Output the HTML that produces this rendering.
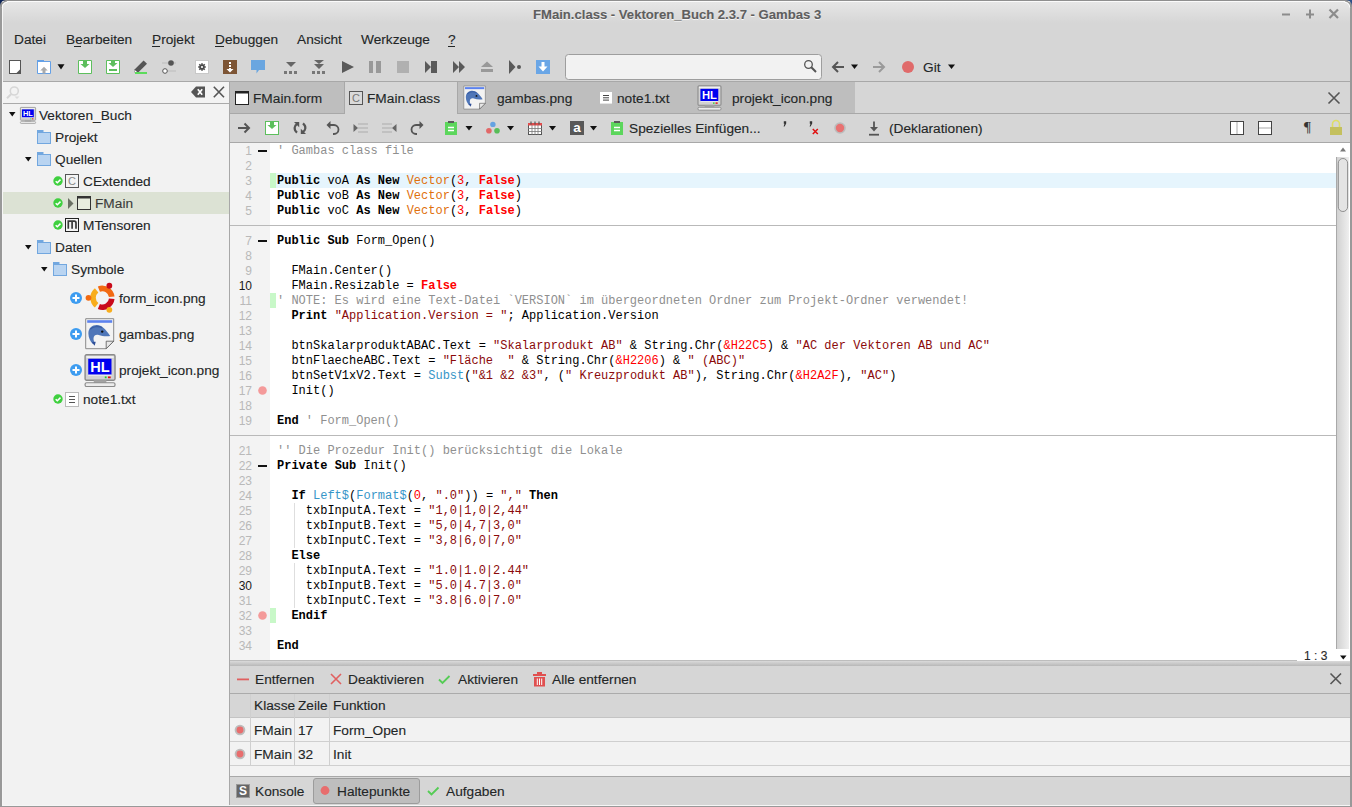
<!DOCTYPE html><html><head><meta charset="utf-8"><style>
*{margin:0;padding:0;box-sizing:border-box}
html,body{width:1352px;height:807px;overflow:hidden;background:#d6d6d6;font-family:"Liberation Sans",sans-serif}
.a{position:absolute;display:block}
.t{position:absolute;white-space:pre;line-height:16px;font-family:"Liberation Sans",sans-serif;-webkit-text-stroke:0.12px currentColor}
.c{position:absolute;left:277px;white-space:pre;font-family:"Liberation Mono",monospace;font-size:12px;line-height:15px;color:#000}
.n{position:absolute;left:230px;width:22px;text-align:right;font-family:"Liberation Sans",sans-serif;font-size:12px;line-height:15px;color:#b9b9b9}
.k{font-weight:bold}
.cm{color:#8f8f8f}
.s{color:#8b0a0a}
.nu{color:#ff0000}
.kf{color:#ff0000;font-weight:bold}
.cl{color:#e0700c}
.fn{color:#3796c8}
u{text-decoration:none;border-bottom:1px solid #232627}
</style></head><body>
<div class="a" style="left:0px;top:0px;width:1352px;height:28px;background:linear-gradient(#e6e6e6 2px,#d6d6d6 23px);"></div>
<div class="a" style="left:0px;top:0px;width:1352px;height:1px;background:#6a6a6a;"></div>
<div class="a" style="left:1px;top:1px;width:1350px;height:1px;background:#f4f4f4;"></div>
<div class="t" style="left:533px;top:7px;font-size:13.1px;color:#5e5e5e;font-weight:bold;text-shadow:0 1px 0 #f6f6f6">FMain.class - Vektoren_Buch 2.3.7 - Gambas 3</div>
<svg class="a" style="left:1278px;top:6px" width="62" height="16" viewBox="0 0 62 16"><rect x="4" y="7.5" width="8" height="2" fill="#8c8c8c"/><rect x="28" y="4" width="8" height="2" fill="#8c8c8c" transform="translate(0,3.5)"/><rect x="31" y="3.5" width="2" height="9" fill="#8c8c8c"/><path d="M51.5 3.5 L60 12 M60 3.5 L51.5 12" stroke="#8c8c8c" stroke-width="2.2"/></svg>
<div class="t" style="left:14px;top:32px;font-size:13.7px;color:#232627;font-weight:normal;">Datei</div>
<div class="t" style="left:66px;top:32px;font-size:13.7px;color:#232627;font-weight:normal;">Bearbeiten</div>
<div class="t" style="left:152px;top:32px;font-size:13.7px;color:#232627;font-weight:normal;">Projekt</div>
<div class="t" style="left:215px;top:32px;font-size:13.7px;color:#232627;font-weight:normal;">Debuggen</div>
<div class="t" style="left:297px;top:32px;font-size:13.7px;color:#232627;font-weight:normal;">Ansicht</div>
<div class="t" style="left:361px;top:32px;font-size:13.7px;color:#232627;font-weight:normal;">Werkzeuge</div>
<div class="t" style="left:448px;top:32px;font-size:13.7px;color:#232627;font-weight:normal;">?</div>
<div class="a" style="left:74px;top:46px;width:7px;height:1px;background:#232627;"></div>
<div class="a" style="left:152px;top:46px;width:8px;height:1px;background:#232627;"></div>
<div class="a" style="left:215px;top:46px;width:9px;height:1px;background:#232627;"></div>
<div class="a" style="left:448px;top:46px;width:7px;height:1px;background:#232627;"></div>
<div class="a" style="left:0px;top:0px;width:1px;height:807px;background:#7a7a7a;"></div>
<div class="a" style="left:1351px;top:0px;width:1px;height:807px;background:#7a7a7a;"></div>
<div class="a" style="left:0px;top:806px;width:1352px;height:1px;background:#7a7a7a;"></div>
<svg class="a" style="left:0px;top:52px" width="1352" height="30" viewBox="0 0 1352 30"><rect x="9.5" y="8.5" width="11" height="13" fill="#fff" stroke="#555"/><path d="M21 16.5 V22 H15.5 z" fill="#555"/><path d="M37.5 9.5 h13 v12 h-13 z" fill="#fff" stroke="#64a0e6"/><rect x="37" y="8" width="7" height="2" fill="#64a0e6"/><path d="M40.3 18.5 l3.7 -3.8 3.7 3.8 h-2.2 v3 h-3 v-3 z" fill="#aaa"/><path d="M57.5 12.3 h7 l-3.5 5.2 z" fill="#111"/><path d="M78.5 8.5 h13 v13 h-13 z" fill="#fff" stroke="#5dbf5d"/><path d="M83 8 h4 v4 h2.5 l-4.5 4 -4.5 -4 h2.5 z" fill="#5dbf5d"/><path d="M106.5 8.5 h13 v13 h-13 z" fill="#fff" stroke="#5dbf5d"/><path d="M111 8 h4 v3 h2.5 l-4.5 4 -4.5 -4 h2.5 z" fill="#5dbf5d"/><rect x="109" y="17" width="8" height="2" fill="#5dbf5d"/><path d="M134.8 17.2 L143.6 8.4 L147 11.8 L138.2 20.6 L134.5 21 z" fill="#555"/><path d="M135.2 18.2 l2.4 2.4 -3 .5 z" fill="#fff"/><rect x="135" y="20" width="12" height="2" fill="#5cdc5c"/><rect x="162" y="10.5" width="14" height="1" fill="#bbb"/><circle cx="171" cy="11" r="2.8" fill="#555"/><rect x="166" y="18.5" width="10" height="1" fill="#bbb"/><circle cx="165" cy="19" r="2.3" fill="#fff" stroke="#555" stroke-width="1"/><rect x="195.5" y="8.5" width="13" height="13" fill="#fff" stroke="#c8c8c8"/><path d="M202 11.2v7.6M198.2 15h7.6M199.3 12.3l5.4 5.4M204.7 12.3l-5.4 5.4" stroke="#4a4a4a" stroke-width="1.6"/><circle cx="202" cy="15" r="2.6" fill="#4a4a4a"/><circle cx="202" cy="15" r="1.1" fill="#fff"/><rect x="223" y="8" width="14" height="14" fill="#7d5535"/><rect x="229" y="10" width="2" height="2" fill="#fff"/><rect x="229" y="13" width="2" height="2" fill="#fff"/><path d="M229 16 h2 v1 h2.5 l-3.5 3.5 -3.5 -3.5 h2.5 z" fill="#fff"/><path d="M251 8 h14 v10 h-6 l-2.5 3.5 v-3.5 h-5.5 z" fill="#6aa6e0"/><path d="M286 10 h10 l-5 5 z" fill="#666"/><rect x="284" y="19" width="3" height="3" fill="#777"/><rect x="289" y="19" width="3" height="3" fill="#777"/><rect x="294" y="19" width="3" height="3" fill="#777"/><path d="M314 8 h10 l-5 4 z M314 12 h10 l-5 5 z" fill="#666"/><rect x="312" y="19" width="3" height="3" fill="#777"/><rect x="317" y="19" width="3" height="3" fill="#777"/><rect x="322" y="19" width="3" height="3" fill="#777"/><path d="M342 9 L354 15 L342 21 z" fill="#5a5a5a"/><rect x="369" y="9" width="4" height="12" fill="#999"/><rect x="376" y="9" width="5" height="12" fill="#999"/><rect x="397" y="9" width="12" height="12" fill="#b0b0b0"/><path d="M425 9 L431 15 L425 21 z" fill="#5a5a5a"/><rect x="431" y="9" width="6" height="12" fill="#5a5a5a"/><path d="M453 9 L459 15 L453 21 z M459 9 L465 15 L459 21 z" fill="#5a5a5a"/><path d="M481 15 L487 9.5 L493 15 z" fill="#999"/><rect x="481" y="17" width="12" height="3" fill="#999"/><path d="M509 8 L515.5 15 L509 22 z" fill="#5a5a5a"/><circle cx="519" cy="15" r="2" fill="#5a5a5a"/><rect x="536" y="8" width="14" height="14" fill="#6aa6e6"/><path d="M541.5 10 h3 v4.5 h3 l-4.5 5 -4.5 -5 h3 z" fill="#fff"/><rect x="565.5" y="2.5" width="256" height="25" rx="3" fill="#f2f2f2" stroke="#9e9e9e"/><circle cx="808.5" cy="12.5" r="3.8" fill="none" stroke="#555" stroke-width="1.3"/><path d="M811.3 15.3 L816 20" stroke="#555" stroke-width="2"/><path d="M833 15 h11 M838 10 l-5 5 5 5" fill="none" stroke="#555" stroke-width="2"/><path d="M851 12.5 h7 l-3.5 4.5 z" fill="#111"/><path d="M873 15 h11 M879 10 l5 5 -5 5" fill="none" stroke="#9a9a9a" stroke-width="2"/><circle cx="908" cy="15" r="6" fill="#e06b6b"/><path d="M948 12.5 h7 l-3.5 4.5 z" fill="#111"/></svg>
<div class="t" style="left:923px;top:60px;font-size:13.7px;color:#232627;font-weight:normal;">Git</div>
<div class="a" style="left:1px;top:81px;width:1350px;height:1px;background:#a8a8a8;"></div>
<div class="a" style="left:0px;top:82px;width:229px;height:725px;background:#f2f2f2;"></div>
<div class="a" style="left:0px;top:82px;width:229px;height:21px;background:#f3f3f3;"></div>
<div class="a" style="left:0px;top:103px;width:229px;height:1px;background:#aaaaaa;"></div>
<div class="a" style="left:229px;top:82px;width:1px;height:725px;background:#a8a8a8;"></div>
<svg class="a" style="left:0px;top:82px" width="229" height="21" viewBox="0 0 229 21"><circle cx="14.3" cy="9" r="4" fill="none" stroke="#d6d6d6" stroke-width="1.6"/><path d="M11.3 12 L7 16.3" stroke="#d6d6d6" stroke-width="2"/><path d="M14.5 14.5 h5 l-2.5 2.5 z" fill="#dcdcdc"/><path d="M191 10 L196 4.5 H205 V15.5 H196 z" fill="#555"/><path d="M197.8 7.3 L202.2 12.7 M202.2 7.3 L197.8 12.7" stroke="#fff" stroke-width="1.7"/><path d="M213.8 4.8 L224 15.2 M224 4.8 L213.8 15.2" stroke="#555" stroke-width="1.6"/></svg>
<div class="a" style="left:1px;top:192px;width:228px;height:22px;background:#dce2d4;"></div>
<svg class="a" style="left:0px;top:82px" width="229" height="340" viewBox="0 0 229 340"><path d="M9 30 h6.5 l-3.25 4.5 z" fill="#111"/><g transform="translate(20,25) scale(1.0)"><rect x="0.4" y="0.4" width="15.2" height="12.9" rx="0.7" fill="#d2d2d2" stroke="#8a8a8a" stroke-width="0.7"/><rect x="1.1" y="1.1" width="13.8" height="0.9" fill="#f2f2f2"/><rect x="2" y="2.4" width="11.8" height="8.1" fill="#0000f0"/><rect x="2" y="10.5" width="11.8" height="0.5" fill="#f4f4f4"/><text x="7.9" y="9.1" style="font-family:&quot;Liberation Sans&quot;" font-weight="bold" font-size="7.4" fill="#fff" text-anchor="middle">HL</text><rect x="10.4" y="11.4" width="0.9" height="0.9" fill="#20d020"/><rect x="12" y="11.4" width="1.4" height="0.9" fill="#e01010"/><rect x="4.8" y="13.3" width="6.4" height="1.4" fill="#a4a4a4"/><rect x="0.4" y="14.6" width="15.2" height="1.9" rx="0.8" fill="#ececec" stroke="#8a8a8a" stroke-width="0.6"/></g><rect x="37.5" y="50.5" width="13" height="11" fill="#b9d4f1" stroke="#72a7df"/><rect x="37" y="48" width="6.5" height="3" fill="#72a7df"/><path d="M25 75 h6.5 l-3.25 4.5 z" fill="#111"/><rect x="37.5" y="72.5" width="13" height="11" fill="#b9d4f1" stroke="#72a7df"/><rect x="37" y="70" width="6.5" height="3" fill="#72a7df"/><circle cx="58" cy="99" r="4.7" fill="#3fd03f"/><path d="M55.7 99.2 l1.6 1.6 3.2 -3.2" fill="none" stroke="#fff" stroke-width="1.5"/><rect x="65.5" y="92.5" width="13" height="13" fill="#f4f4f4" stroke="#555"/><text x="72" y="103.3" style="font-family:&quot;Liberation Sans&quot;" font-size="11" fill="#888" text-anchor="middle">C</text><circle cx="58" cy="121" r="4.7" fill="#3fd03f"/><path d="M55.7 121.2 l1.6 1.6 3.2 -3.2" fill="none" stroke="#fff" stroke-width="1.5"/><path d="M68 116 L73.5 121.5 L68 127 z" fill="#6a7064"/><rect x="77.5" y="114.5" width="13" height="13" fill="#e8eddf" stroke="#333"/><rect x="77" y="114" width="14" height="2.5" fill="#333"/><circle cx="58" cy="143" r="4.7" fill="#3fd03f"/><path d="M55.7 143.2 l1.6 1.6 3.2 -3.2" fill="none" stroke="#fff" stroke-width="1.5"/><rect x="65.5" y="136.5" width="13" height="13" fill="#f4f4f4" stroke="#222"/><path d="M68.3 146.8 V139.2 H74.3 Q76 139.2 76 141 V146.8 M72.1 139.5 V146.8" fill="none" stroke="#3a3a3a" stroke-width="1.7"/><path d="M25 163 h6.5 l-3.25 4.5 z" fill="#111"/><rect x="37.5" y="160.5" width="13" height="11" fill="#b9d4f1" stroke="#72a7df"/><rect x="37" y="158" width="6.5" height="3" fill="#72a7df"/><path d="M41 185 h6.5 l-3.25 4.5 z" fill="#111"/><rect x="53.5" y="182.5" width="13" height="11" fill="#b9d4f1" stroke="#72a7df"/><rect x="53" y="180" width="6.5" height="3" fill="#72a7df"/><circle cx="76" cy="216" r="6" fill="#3d9cf0"/><path d="M72.5 216 h7 M76 212.5 v7" stroke="#fff" stroke-width="2"/><path d="M97.83 204.49 A12.2 12.2 0 0 1 114.53 214.52 L108.96 215.11 A6.6 6.6 0 0 0 99.93 209.68 z" fill="#f26a12"/><path d="M114.53 217.08 A12.2 12.2 0 0 1 97.83 227.11 L99.93 221.92 A6.6 6.6 0 0 0 108.96 216.49 z" fill="#c90a1a"/><path d="M94.89 225.41 A12.2 12.2 0 0 1 94.89 206.19 L98.34 210.60 A6.6 6.6 0 0 0 98.34 221.00 z" fill="#f8ad1c"/><circle cx="109.35" cy="203.76" r="2.9" fill="#c90a1a"/><circle cx="88.50" cy="215.80" r="2.9" fill="#f26a12"/><circle cx="109.35" cy="227.84" r="2.9" fill="#f8ad1c"/><circle cx="76" cy="252" r="6" fill="#3d9cf0"/><path d="M72.5 252 h7 M76 248.5 v7" stroke="#fff" stroke-width="2"/><g transform="translate(85.2,236.2) scale(1.0)"><path d="M0.5 0.5 H28.5 V23 L21 30.5 H0.5 z" fill="#f3f3f3" stroke="#8a8a8a" stroke-width="1"/><path d="M28.5 23 H21 V30.5 z" fill="#e8e8e8" stroke="#555" stroke-width="0.8"/><rect x="2" y="2" width="25" height="2.6" fill="#5c82ee"/><path d="M3.2 15.5 C3 10 7 6.8 11.5 6.8 C16.5 6.8 20.5 11 25 17.8 C21 18.6 17 18 13.5 16.8 C10.5 16 8.3 17.5 8.3 20.5 C8.3 22.5 9.2 23.8 10.3 24.8 L7.5 25.5 C5 23 3.3 19.5 3.2 15.5 z" fill="#4f76b8"/><path d="M6.5 24 L10.5 23.5 L9.5 27.5 z" fill="#2f4f98"/><path d="M5 11 C8 8 13 7.5 17 9.5" fill="none" stroke="#3a5ea4" stroke-width="1.3"/><circle cx="17" cy="13.4" r="1.2" fill="#111"/></g><circle cx="76" cy="288" r="6" fill="#3d9cf0"/><path d="M72.5 288 h7 M76 284.5 v7" stroke="#fff" stroke-width="2"/><g transform="translate(84.3,272) scale(1.97)"><rect x="0.4" y="0.4" width="15.2" height="12.9" rx="0.7" fill="#d2d2d2" stroke="#8a8a8a" stroke-width="0.7"/><rect x="1.1" y="1.1" width="13.8" height="0.9" fill="#f2f2f2"/><rect x="2" y="2.4" width="11.8" height="8.1" fill="#0000f0"/><rect x="2" y="10.5" width="11.8" height="0.5" fill="#f4f4f4"/><text x="7.9" y="9.1" style="font-family:&quot;Liberation Sans&quot;" font-weight="bold" font-size="7.4" fill="#fff" text-anchor="middle">HL</text><rect x="10.4" y="11.4" width="0.9" height="0.9" fill="#20d020"/><rect x="12" y="11.4" width="1.4" height="0.9" fill="#e01010"/><rect x="4.8" y="13.3" width="6.4" height="1.4" fill="#a4a4a4"/><rect x="0.4" y="14.6" width="15.2" height="1.9" rx="0.8" fill="#ececec" stroke="#8a8a8a" stroke-width="0.6"/></g><circle cx="58" cy="317" r="4.7" fill="#3fd03f"/><path d="M55.7 317.2 l1.6 1.6 3.2 -3.2" fill="none" stroke="#fff" stroke-width="1.5"/><rect x="65.5" y="310.5" width="13" height="14" fill="#fff" stroke="#bbb"/><path d="M69 314.5h6M69 317.5h6M69 320.5h6" stroke="#555" stroke-width="1"/></svg>
<div class="t" style="left:39px;top:108px;font-size:13.7px;color:#232627;font-weight:normal;">Vektoren_Buch</div>
<div class="t" style="left:55px;top:130px;font-size:13.7px;color:#232627;font-weight:normal;">Projekt</div>
<div class="t" style="left:55px;top:152px;font-size:13.7px;color:#232627;font-weight:normal;">Quellen</div>
<div class="t" style="left:83px;top:174px;font-size:13.7px;color:#232627;font-weight:normal;">CExtended</div>
<div class="t" style="left:95px;top:196px;font-size:13.7px;color:#3b3b3b;font-weight:normal;">FMain</div>
<div class="t" style="left:83px;top:218px;font-size:13.7px;color:#232627;font-weight:normal;">MTensoren</div>
<div class="t" style="left:55px;top:240px;font-size:13.7px;color:#232627;font-weight:normal;">Daten</div>
<div class="t" style="left:71px;top:262px;font-size:13.7px;color:#232627;font-weight:normal;">Symbole</div>
<div class="t" style="left:119px;top:291px;font-size:13.7px;color:#232627;font-weight:normal;">form_icon.png</div>
<div class="t" style="left:119px;top:327px;font-size:13.7px;color:#232627;font-weight:normal;">gambas.png</div>
<div class="t" style="left:119px;top:363px;font-size:13.7px;color:#232627;font-weight:normal;">projekt_icon.png</div>
<div class="t" style="left:83px;top:392px;font-size:13.7px;color:#232627;font-weight:normal;">note1.txt</div>
<div class="a" style="left:230px;top:82px;width:1121px;height:31px;background:#d6d6d6;"></div>
<div class="a" style="left:230px;top:82px;width:625px;height:31px;background:#bebebe;"></div>
<div class="a" style="left:230px;top:113px;width:1121px;height:1px;background:#a8a8a8;"></div>
<div class="a" style="left:344px;top:82px;width:114px;height:32px;background:#d6d6d6;"></div>
<div class="a" style="left:344px;top:82px;width:1px;height:32px;background:#a8a8a8;"></div>
<div class="a" style="left:457px;top:82px;width:1px;height:32px;background:#a8a8a8;"></div>
<svg class="a" style="left:230px;top:82px" width="1122" height="31" viewBox="0 0 1122 31"><rect x="5.5" y="9.5" width="13" height="13" fill="#fff" stroke="#222"/><rect x="5" y="9" width="14" height="2.5" fill="#222"/><rect x="119.5" y="9.5" width="13" height="13" fill="#dadada" stroke="#555"/><text x="126" y="20.3" style="font-family:&quot;Liberation Sans&quot;" font-size="11" fill="#777" text-anchor="middle">C</text><g transform="translate(233.4,3.6) scale(0.77)"><path d="M0.5 0.5 H28.5 V23 L21 30.5 H0.5 z" fill="#f3f3f3" stroke="#8a8a8a" stroke-width="1"/><path d="M28.5 23 H21 V30.5 z" fill="#e8e8e8" stroke="#555" stroke-width="0.8"/><rect x="2" y="2" width="25" height="2.6" fill="#5c82ee"/><path d="M3.2 15.5 C3 10 7 6.8 11.5 6.8 C16.5 6.8 20.5 11 25 17.8 C21 18.6 17 18 13.5 16.8 C10.5 16 8.3 17.5 8.3 20.5 C8.3 22.5 9.2 23.8 10.3 24.8 L7.5 25.5 C5 23 3.3 19.5 3.2 15.5 z" fill="#4f76b8"/><path d="M6.5 24 L10.5 23.5 L9.5 27.5 z" fill="#2f4f98"/><path d="M5 11 C8 8 13 7.5 17 9.5" fill="none" stroke="#3a5ea4" stroke-width="1.3"/><circle cx="17" cy="13.4" r="1.2" fill="#111"/></g><rect x="370" y="10" width="12" height="11.6" fill="#fff"/><path d="M373 13.5h6M373 15.8h6M373 18.1h6" stroke="#444" stroke-width="1"/><g transform="translate(467.4,3.2) scale(1.5125)"><rect x="0.4" y="0.4" width="15.2" height="12.9" rx="0.7" fill="#d2d2d2" stroke="#8a8a8a" stroke-width="0.7"/><rect x="1.1" y="1.1" width="13.8" height="0.9" fill="#f2f2f2"/><rect x="2" y="2.4" width="11.8" height="8.1" fill="#0000f0"/><rect x="2" y="10.5" width="11.8" height="0.5" fill="#f4f4f4"/><text x="7.9" y="9.1" style="font-family:&quot;Liberation Sans&quot;" font-weight="bold" font-size="7.4" fill="#fff" text-anchor="middle">HL</text><rect x="10.4" y="11.4" width="0.9" height="0.9" fill="#20d020"/><rect x="12" y="11.4" width="1.4" height="0.9" fill="#e01010"/><rect x="4.8" y="13.3" width="6.4" height="1.4" fill="#a4a4a4"/><rect x="0.4" y="14.6" width="15.2" height="1.9" rx="0.8" fill="#ececec" stroke="#8a8a8a" stroke-width="0.6"/></g><path d="M1098.5 10.5 L1109.5 21.5 M1109.5 10.5 L1098.5 21.5" stroke="#555" stroke-width="1.6"/></svg>
<div class="t" style="left:253px;top:91px;font-size:13.7px;color:#232627;font-weight:normal;">FMain.form</div>
<div class="t" style="left:367px;top:91px;font-size:13.7px;color:#232627;font-weight:normal;">FMain.class</div>
<div class="t" style="left:497px;top:91px;font-size:13.7px;color:#232627;font-weight:normal;">gambas.png</div>
<div class="t" style="left:617px;top:91px;font-size:13.7px;color:#232627;font-weight:normal;">note1.txt</div>
<div class="t" style="left:732px;top:91px;font-size:13.7px;color:#232627;font-weight:normal;">projekt_icon.png</div>
<div class="a" style="left:230px;top:114px;width:1121px;height:28px;background:#d6d6d6;"></div>
<div class="a" style="left:230px;top:142px;width:1121px;height:1px;background:#a8a8a8;"></div>
<svg class="a" style="left:230px;top:114px" width="1122" height="28" viewBox="0 0 1122 28"><path d="M8 14 h11 M14.5 9.5 l4.5 4.5 -4.5 4.5" fill="none" stroke="#555" stroke-width="2"/><rect x="35.5" y="7.5" width="13" height="13" fill="#fff" stroke="#5dbf5d"/><path d="M40 7 h4 v4 h2.5 l-4.5 4 -4.5 -4 h2.5 z" fill="#5dbf5d"/><path d="M67.5 9.8 C64.3 11.5 63.3 15.5 67 18.7 M72.5 18.2 C75.7 16.5 76.7 12.5 73 9.3" fill="none" stroke="#555" stroke-width="2.2"/><path d="M64 8 H69.2 V13.2 z M76 20 H70.8 V14.8 z" fill="#555"/><path d="M98 11 h6 a4.5 4.5 0 0 1 0 9 h-1" fill="none" stroke="#555" stroke-width="1.8"/><path d="M96.5 11 l4 -4 v8 z" fill="#555"/><path d="M123.5 10 l4.5 4 -4.5 4 z" fill="#666"/><path d="M128 10h10M128 14h10M128 18h10" stroke="#bbb" stroke-width="1.6"/><path d="M152 10h10M152 14h10M152 18h10" stroke="#bbb" stroke-width="1.6"/><path d="M166.5 10 l-4.5 4 4.5 4 z" fill="#666"/><path d="M192 11 h-6 a4.5 4.5 0 0 0 0 9 h1" fill="none" stroke="#555" stroke-width="1.8"/><path d="M193.5 11 l-4 -4 v8 z" fill="#555"/><rect x="215" y="8" width="12" height="13" fill="#5cd65c"/><rect x="218" y="7" width="6" height="2" fill="#5a5a5a"/><path d="M218 13.5h6M218 16.5h6" stroke="#fff" stroke-width="1.3"/><path d="M235.5 12 h7 l-3.5 4.5 z" fill="#111"/><circle cx="262.9" cy="10.4" r="2.7" fill="#64a2e2"/><circle cx="258.9" cy="16.8" r="2.8" fill="#e26868"/><circle cx="267" cy="16.8" r="2.8" fill="#58bd58"/><path d="M277 12 h7 l-3.5 4.5 z" fill="#111"/><rect x="298.5" y="9.5" width="13" height="11" fill="#fff" stroke="#555"/><rect x="298" y="9" width="14" height="2.5" fill="#e24c4c"/><path d="M298 14.5h14M298 17.5h14M302 11v10M305 11v10M308 11v10" stroke="#777" stroke-width="0.8"/><path d="M301 7.5v3M305 7.5v3M309 7.5v3" stroke="#555" stroke-width="1.2"/><path d="M319 12 h7 l-3.5 4.5 z" fill="#111"/><rect x="340" y="7" width="14" height="14" fill="#585858"/><text x="347" y="18" style="font-family:&quot;Liberation Sans&quot;" font-weight="bold" font-size="13.5" fill="#fff" text-anchor="middle">a</text><path d="M360 12 h7 l-3.5 4.5 z" fill="#111"/><rect x="381" y="8" width="12" height="13" fill="#5cd65c"/><rect x="384" y="7" width="6" height="2" fill="#5a5a5a"/><path d="M384 13.5h6M384 16.5h6" stroke="#fff" stroke-width="1.3"/><path d="M553.8 7.2 h2.4 v2.2 l-1.6 3 h-1 l0.9 -2.7 h-0.7 z" fill="#333"/><path d="M579.8 7.2 h2.4 v2.2 l-1.6 3 h-1 l0.9 -2.7 h-0.7 z" fill="#333"/><path d="M582.8 15 l5 5 M587.8 15 l-5 5" stroke="#e01010" stroke-width="1.5"/><circle cx="610" cy="14" r="5" fill="#e87272" stroke="#bcbcbc" stroke-width="1.6"/><path d="M644 7.5 v6.5" stroke="#555" stroke-width="1.8"/><path d="M640 13 h8 l-4 4.5 z" fill="#555"/><rect x="639" y="19.8" width="10" height="1.8" fill="#555"/><rect x="1000.5" y="7.5" width="13" height="13" fill="#fff" stroke="#444"/><rect x="1006.5" y="8" width="1" height="12" fill="#aaa"/><rect x="1028.5" y="7.5" width="13" height="13" fill="#fff" stroke="#444"/><rect x="1029" y="13.5" width="12" height="1" fill="#aaa"/><path d="M1102.5 13 v-3 a3.5 3.5 0 0 1 7 0 v3" fill="none" stroke="#dede62" stroke-width="1.6"/><rect x="1100" y="13" width="12" height="8" fill="#c4c05e"/></svg>
<div class="t" style="left:629px;top:121px;font-size:13.7px;color:#232627;font-weight:normal;">Spezielles Einfügen...</div>
<div class="t" style="left:889px;top:121px;font-size:13.7px;color:#232627;font-weight:normal;">(Deklarationen)</div>
<div class="t" style="left:1304px;top:119px;font-size:15px;color:#333;font-weight:normal;font-family:'Liberation Serif'">¶</div>
<div class="a" style="left:230px;top:143px;width:1106px;height:518px;background:#ffffff;"></div>
<div class="a" style="left:230px;top:143px;width:40px;height:518px;background:#f3f3f3;"></div>
<div class="a" style="left:276px;top:173px;width:1060px;height:15px;background:#e6f5fd;"></div>
<div class="a" style="left:270px;top:173px;width:6px;height:15px;background:#c8f8c8;"></div>
<div class="a" style="left:270px;top:293px;width:6px;height:15px;background:#c8f8c8;"></div>
<div class="a" style="left:270px;top:608px;width:6px;height:15px;background:#c8f8c8;"></div>
<div class="a" style="left:230px;top:225px;width:1106px;height:1px;background:#b9b9b9;"></div>
<div class="a" style="left:230px;top:435px;width:1106px;height:1px;background:#b9b9b9;"></div>
<div class="a" style="left:294px;top:503px;width:1px;height:15px;background:#dedede;"></div>
<div class="a" style="left:294px;top:518px;width:1px;height:15px;background:#dedede;"></div>
<div class="a" style="left:294px;top:533px;width:1px;height:15px;background:#dedede;"></div>
<div class="a" style="left:294px;top:563px;width:1px;height:15px;background:#dedede;"></div>
<div class="a" style="left:294px;top:578px;width:1px;height:15px;background:#dedede;"></div>
<div class="a" style="left:294px;top:593px;width:1px;height:15px;background:#dedede;"></div>
<div class="n" style="top:144px;color:#b9b9b9">1</div>
<div class="n" style="top:159px;color:#b9b9b9">2</div>
<div class="n" style="top:174px;color:#b9b9b9">3</div>
<div class="n" style="top:189px;color:#b9b9b9">4</div>
<div class="n" style="top:204px;color:#b9b9b9">5</div>
<div class="n" style="top:234px;color:#b9b9b9">7</div>
<div class="n" style="top:249px;color:#b9b9b9">8</div>
<div class="n" style="top:264px;color:#b9b9b9">9</div>
<div class="n" style="top:279px;color:#1a1a1a">10</div>
<div class="n" style="top:294px;color:#b9b9b9">11</div>
<div class="n" style="top:309px;color:#b9b9b9">12</div>
<div class="n" style="top:324px;color:#b9b9b9">13</div>
<div class="n" style="top:339px;color:#b9b9b9">14</div>
<div class="n" style="top:354px;color:#b9b9b9">15</div>
<div class="n" style="top:369px;color:#b9b9b9">16</div>
<div class="n" style="top:384px;color:#b9b9b9">17</div>
<div class="n" style="top:399px;color:#b9b9b9">18</div>
<div class="n" style="top:414px;color:#b9b9b9">19</div>
<div class="n" style="top:444px;color:#b9b9b9">21</div>
<div class="n" style="top:459px;color:#b9b9b9">22</div>
<div class="n" style="top:474px;color:#b9b9b9">23</div>
<div class="n" style="top:489px;color:#b9b9b9">24</div>
<div class="n" style="top:504px;color:#b9b9b9">25</div>
<div class="n" style="top:519px;color:#b9b9b9">26</div>
<div class="n" style="top:534px;color:#b9b9b9">27</div>
<div class="n" style="top:549px;color:#b9b9b9">28</div>
<div class="n" style="top:564px;color:#b9b9b9">29</div>
<div class="n" style="top:579px;color:#1a1a1a">30</div>
<div class="n" style="top:594px;color:#b9b9b9">31</div>
<div class="n" style="top:609px;color:#b9b9b9">32</div>
<div class="n" style="top:624px;color:#b9b9b9">33</div>
<div class="n" style="top:639px;color:#b9b9b9">34</div>
<div class="c" style="top:144px"><span class="cm">&#x27; Gambas class file</span></div>
<div class="c" style="top:174px"><span class="k">Public</span> voA <span class="k">As</span> <span class="k">New</span> <span class="cl">Vector</span>(<span class="nu">3</span>, <span class="kf">False</span>)</div>
<div class="c" style="top:189px"><span class="k">Public</span> voB <span class="k">As</span> <span class="k">New</span> <span class="cl">Vector</span>(<span class="nu">3</span>, <span class="kf">False</span>)</div>
<div class="c" style="top:204px"><span class="k">Public</span> voC <span class="k">As</span> <span class="k">New</span> <span class="cl">Vector</span>(<span class="nu">3</span>, <span class="kf">False</span>)</div>
<div class="c" style="top:234px"><span class="k">Public</span> <span class="k">Sub</span> Form_Open()</div>
<div class="c" style="top:264px">  FMain.Center()</div>
<div class="c" style="top:279px">  FMain.Resizable = <span class="kf">False</span></div>
<div class="c" style="top:294px"><span class="cm">&#x27; NOTE: Es wird eine Text-Datei `VERSION` im übergeordneten Ordner zum Projekt-Ordner verwendet!</span></div>
<div class="c" style="top:309px">  <span class="k">Print</span> <span class="s">&quot;Application.Version = &quot;</span>; Application.Version</div>
<div class="c" style="top:339px">  btnSkalarproduktABAC.Text = <span class="s">&quot;Skalarprodukt AB&quot;</span> &amp; String.Chr(<span class="nu">&amp;H22C5</span>) &amp; <span class="s">&quot;AC der Vektoren AB und AC&quot;</span></div>
<div class="c" style="top:354px">  btnFlaecheABC.Text = <span class="s">&quot;Fläche  &quot;</span> &amp; String.Chr(<span class="nu">&amp;H2206</span>) &amp; <span class="s">&quot; (ABC)&quot;</span></div>
<div class="c" style="top:369px">  btnSetV1xV2.Text = <span class="fn">Subst</span>(<span class="s">&quot;&amp;1 &amp;2 &amp;3&quot;</span>, (<span class="s">&quot; Kreuzprodukt AB&quot;</span>), String.Chr(<span class="nu">&amp;H2A2F</span>), <span class="s">&quot;AC&quot;</span>)</div>
<div class="c" style="top:384px">  Init()</div>
<div class="c" style="top:414px"><span class="k">End</span> <span class="cm">&#x27; Form_Open()</span></div>
<div class="c" style="top:444px"><span class="cm">&#x27;&#x27; Die Prozedur Init() berücksichtigt die Lokale</span></div>
<div class="c" style="top:459px"><span class="k">Private</span> <span class="k">Sub</span> Init()</div>
<div class="c" style="top:489px">  <span class="k">If</span> <span class="fn">Left$</span>(<span class="fn">Format$</span>(<span class="nu">0</span>, <span class="s">&quot;.0&quot;</span>)) = <span class="s">&quot;,&quot;</span> <span class="k">Then</span></div>
<div class="c" style="top:504px">    txbInputA.Text = <span class="s">&quot;1,0|1,0|2,44&quot;</span></div>
<div class="c" style="top:519px">    txbInputB.Text = <span class="s">&quot;5,0|4,7|3,0&quot;</span></div>
<div class="c" style="top:534px">    txbInputC.Text = <span class="s">&quot;3,8|6,0|7,0&quot;</span></div>
<div class="c" style="top:549px">  <span class="k">Else</span></div>
<div class="c" style="top:564px">    txbInputA.Text = <span class="s">&quot;1.0|1.0|2.44&quot;</span></div>
<div class="c" style="top:579px">    txbInputB.Text = <span class="s">&quot;5.0|4.7|3.0&quot;</span></div>
<div class="c" style="top:594px">    txbInputC.Text = <span class="s">&quot;3.8|6.0|7.0&quot;</span></div>
<div class="c" style="top:609px">  <span class="k">Endif</span></div>
<div class="c" style="top:639px"><span class="k">End</span></div>
<div class="a" style="left:258px;top:150px;width:9px;height:2px;background:#111;"></div>
<div class="a" style="left:258px;top:240px;width:9px;height:2px;background:#111;"></div>
<div class="a" style="left:258px;top:465px;width:9px;height:2px;background:#111;"></div>
<svg class="a" style="left:230px;top:143px" width="50" height="518" viewBox="0 0 50 518"><circle cx="32.5" cy="247.5" r="4.3" fill="#f49a9a"/><circle cx="32.5" cy="472.5" r="4.3" fill="#f49a9a"/></svg>
<div class="a" style="left:1336px;top:143px;width:14px;height:518px;background:#ffffff;"></div>
<div class="a" style="left:1336px;top:157px;width:13px;height:494px;background:linear-gradient(90deg,#cfcfcf,#efefef);"></div>
<div class="a" style="left:1336px;top:157px;width:1px;height:494px;background:#a9a9a9;"></div>
<svg class="a" style="left:1336px;top:143px" width="14" height="518" viewBox="0 0 14 518"><path d="M4 8.5 L7 4.5 L10 8.5 z" fill="#7a7a7a"/><rect x="2.3" y="15.5" width="9.3" height="53" rx="4.6" fill="#e4e4e4" stroke="#8e8e8e" stroke-width="1"/></svg>
<div class="a" style="left:1297px;top:649px;width:52px;height:12px;background:#fff;"></div>
<svg class="a" style="left:1336px;top:649px" width="14" height="14" viewBox="0 0 14 14"><path d="M4 6.5 h6.5 l-3.25 4 z" fill="#111"/></svg>
<div class="t" style="left:1304px;top:648px;font-size:12px;color:#2a2a2a;font-weight:normal;">1 : 3</div>
<div class="a" style="left:230px;top:660px;width:1067px;height:1px;background:#bdbdbd;"></div>
<div class="a" style="left:230px;top:661px;width:1120px;height:5px;background:linear-gradient(#dadada,#b8b8b8);"></div>
<div class="a" style="left:230px;top:666px;width:1120px;height:27px;background:#d6d6d6;"></div>
<div class="a" style="left:230px;top:693px;width:1120px;height:1px;background:#ababab;"></div>
<div class="a" style="left:230px;top:694px;width:1120px;height:23px;background:#d6d6d6;"></div>
<div class="a" style="left:230px;top:717px;width:1120px;height:1px;background:#c4c4c4;"></div>
<div class="a" style="left:230px;top:718px;width:1120px;height:58px;background:#f2f2f2;"></div>
<div class="a" style="left:230px;top:741px;width:1120px;height:1px;background:#cfcfcf;"></div>
<div class="a" style="left:230px;top:765px;width:1120px;height:1px;background:#cfcfcf;"></div>
<div class="a" style="left:230px;top:776px;width:1120px;height:1px;background:#a8a8a8;"></div>
<div class="a" style="left:250px;top:694px;width:1px;height:71px;background:#cfcfcf;"></div>
<div class="a" style="left:294px;top:694px;width:1px;height:71px;background:#cfcfcf;"></div>
<div class="a" style="left:329px;top:694px;width:1px;height:71px;background:#cfcfcf;"></div>
<svg class="a" style="left:230px;top:666px" width="1120" height="110" viewBox="0 0 1120 110"><rect x="7" y="12.5" width="12" height="1.8" fill="#e06060"/><path d="M101 8 L111 18 M111 8 L101 18" stroke="#e06060" stroke-width="1.6"/><path d="M209 13.5 l3.5 3.5 7 -7" fill="none" stroke="#55cc55" stroke-width="1.8"/><rect x="303" y="8" width="13" height="2" fill="#e05050"/><rect x="307" y="6" width="5" height="2" fill="#e05050"/><path d="M304 11 h11 v9.5 h-11 z" fill="#e05050"/><path d="M307.3 12.5v6.5M309.5 12.5v6.5M311.7 12.5v6.5" stroke="#fff" stroke-width="1"/><path d="M1100.5 7.5 L1111 18 M1111 7.5 L1100.5 18" stroke="#555" stroke-width="1.6"/><circle cx="10" cy="64" r="4.4" fill="#e86d6d" stroke="#bdbdbd" stroke-width="1.9"/><circle cx="10" cy="88" r="4.4" fill="#e86d6d" stroke="#bdbdbd" stroke-width="1.9"/></svg>
<div class="t" style="left:255px;top:672px;font-size:13.7px;color:#232627;font-weight:normal;">Entfernen</div>
<div class="t" style="left:348px;top:672px;font-size:13.7px;color:#232627;font-weight:normal;">Deaktivieren</div>
<div class="t" style="left:458px;top:672px;font-size:13.7px;color:#232627;font-weight:normal;">Aktivieren</div>
<div class="t" style="left:552px;top:672px;font-size:13.7px;color:#232627;font-weight:normal;">Alle entfernen</div>
<div class="t" style="left:254px;top:698px;font-size:13.7px;color:#232627;font-weight:normal;">Klasse</div>
<div class="t" style="left:298px;top:698px;font-size:13.7px;color:#232627;font-weight:normal;">Zeile</div>
<div class="t" style="left:333px;top:698px;font-size:13.7px;color:#232627;font-weight:normal;">Funktion</div>
<div class="t" style="left:254px;top:723px;font-size:13.7px;color:#232627;font-weight:normal;">FMain</div>
<div class="t" style="left:298px;top:723px;font-size:13.7px;color:#232627;font-weight:normal;">17</div>
<div class="t" style="left:333px;top:723px;font-size:13.7px;color:#232627;font-weight:normal;">Form_Open</div>
<div class="t" style="left:254px;top:747px;font-size:13.7px;color:#232627;font-weight:normal;">FMain</div>
<div class="t" style="left:298px;top:747px;font-size:13.7px;color:#232627;font-weight:normal;">32</div>
<div class="t" style="left:333px;top:747px;font-size:13.7px;color:#232627;font-weight:normal;">Init</div>
<div class="a" style="left:230px;top:777px;width:1120px;height:29px;background:#d6d6d6;"></div>
<div class="a" style="left:313px;top:778px;width:107px;height:26px;background:#bebebe;border:1px solid #9c9c9c;border-radius:3px"></div>
<svg class="a" style="left:230px;top:777px" width="1120" height="29" viewBox="0 0 1120 29"><rect x="6.5" y="7.5" width="13" height="13" fill="#666" stroke="#999"/><text x="13" y="18.3" style="font-family:&quot;Liberation Sans&quot;" font-weight="bold" font-size="12" fill="#fff" text-anchor="middle">S</text><circle cx="95" cy="13.5" r="4.4" fill="#e86d6d"/><path d="M198 14 l3.5 3.5 7 -7" fill="none" stroke="#55cc55" stroke-width="1.8"/></svg>
<div class="t" style="left:255px;top:784px;font-size:13.7px;color:#232627;font-weight:normal;">Konsole</div>
<div class="t" style="left:337px;top:784px;font-size:13.7px;color:#232627;font-weight:normal;">Haltepunkte</div>
<div class="t" style="left:446px;top:784px;font-size:13.7px;color:#232627;font-weight:normal;">Aufgaben</div>
<div class="a" style="left:0px;top:0px;width:2px;height:807px;background:#999999;"></div>
<div class="a" style="left:2px;top:2px;width:1px;height:804px;background:#f6f6f6;"></div>
<div class="a" style="left:1350px;top:0px;width:2px;height:807px;background:#999999;"></div>
<div class="a" style="left:0px;top:806px;width:1352px;height:1px;background:#999999;"></div>
<div class="a" style="left:2px;top:805px;width:1348px;height:1px;background:#f6f6f6;"></div>
<div class="a" style="left:0px;top:0px;width:1352px;height:1px;background:#8f8f8f;"></div>
<div class="a" style="left:3px;top:1px;width:1346px;height:1px;background:#fbfbfb;"></div>
<svg class="a" style="left:0px;top:0px" width="8" height="8" viewBox="0 0 8 8"><path d="M0 0 H6 A6 6 0 0 0 0 6 z" fill="#0d2458"/><path d="M1 7 A6 6 0 0 1 7 1" fill="none" stroke="#8f8f8f" stroke-width="1.2"/><path d="M2.3 7.5 A5.2 5.2 0 0 1 7.5 2.3" fill="none" stroke="#fbfbfb" stroke-width="1"/></svg>
<svg class="a" style="left:1344px;top:0px" width="8" height="8" viewBox="0 0 8 8"><path d="M8 0 H2 A6 6 0 0 1 8 6 z" fill="#2f5089"/><path d="M7 7 A6 6 0 0 0 1 1" fill="none" stroke="#8f8f8f" stroke-width="1.2"/><path d="M5.7 7.5 A5.2 5.2 0 0 0 0.5 2.3" fill="none" stroke="#fbfbfb" stroke-width="1"/></svg>
</body></html>
